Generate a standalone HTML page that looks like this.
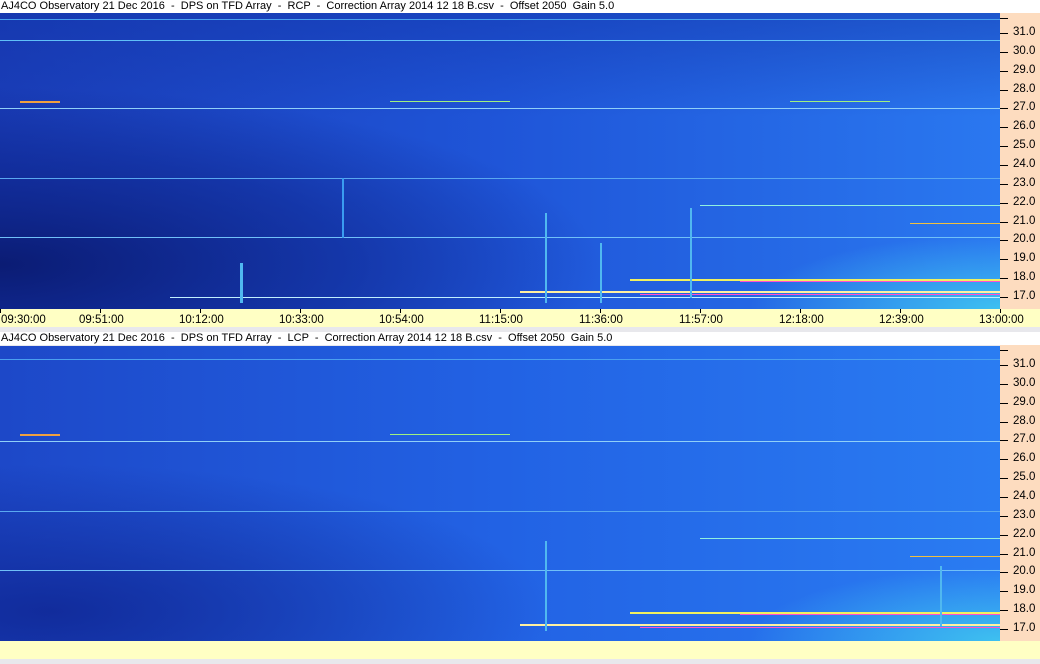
<!DOCTYPE html>
<html><head><style>
body{margin:0;width:1040px;height:664px;overflow:hidden;background:#e8e8ec;font-family:"Liberation Sans",sans-serif;font-size:11px;position:relative}
.t{position:absolute;left:0;width:1040px;height:13px;background:#fff;color:#000;line-height:13px;white-space:pre;padding-left:1px;box-sizing:border-box;font-size:11px}
.ax{position:absolute;left:1000px;width:40px;background:#fddcbf}
.tb{position:absolute;left:0;width:1040px;height:18px;background:#ffffc4}
.lab{position:absolute;font-size:11.5px;color:#000}
.tk{position:absolute;background:#000}
</style></head><body>
<div class="t" style="top:0px">AJ4CO Observatory 21 Dec 2016  -  DPS on TFD Array  -  RCP  -  Correction Array 2014 12 18 B.csv  -  Offset 2050  Gain 5.0</div>
<div class="t" style="top:332px">AJ4CO Observatory 21 Dec 2016  -  DPS on TFD Array  -  LCP  -  Correction Array 2014 12 18 B.csv  -  Offset 2050  Gain 5.0</div>
<div class="ax" style="top:13px;height:296px"></div>
<div class="ax" style="top:345px;height:296px"></div>
<div class="tb" style="top:309px"></div>
<div class="tb" style="top:641px"></div>
<svg width="1000" height="664" style="position:absolute;left:0;top:0">
<defs>
<linearGradient id="h1" x1="0" x2="1" y1="0" y2="0"><stop offset="0" stop-color="#1a3db8"/><stop offset="0.5" stop-color="#1f55d8"/><stop offset="1" stop-color="#2a78f0"/></linearGradient>
<linearGradient id="v1" x1="0" x2="0" y1="0" y2="1"><stop offset="0" stop-color="#1234a8" stop-opacity="0.5"/><stop offset="0.35" stop-color="#1234a8" stop-opacity="0"/><stop offset="1" stop-color="#081a70" stop-opacity="0"/></linearGradient>
<radialGradient id="d1" cx="0" cy="0.85" r="0.6"><stop offset="0" stop-color="#0a1a70" stop-opacity="0.95"/><stop offset="0.6" stop-color="#0c2288" stop-opacity="0.5"/><stop offset="1" stop-color="#0c2288" stop-opacity="0"/></radialGradient>
<radialGradient id="c1" cx="1" cy="1" r="0.25"><stop offset="0" stop-color="#40c8f0" stop-opacity="0.9"/><stop offset="1" stop-color="#40c8f0" stop-opacity="0"/></radialGradient>
<linearGradient id="h2" x1="0" x2="1" y1="0" y2="0"><stop offset="0" stop-color="#1d48c8"/><stop offset="0.5" stop-color="#2262e4"/><stop offset="1" stop-color="#2a7cf2"/></linearGradient>
<radialGradient id="d2" cx="0.05" cy="0.9" r="0.5"><stop offset="0" stop-color="#0e2490" stop-opacity="0.8"/><stop offset="1" stop-color="#0e2490" stop-opacity="0"/></radialGradient>
</defs>
<g transform="translate(0,13)">
<rect width="1000" height="296" fill="url(#h1)"/>
<rect width="1000" height="296" fill="url(#v1)"/>
<rect width="1000" height="296" fill="url(#d1)"/>
<rect width="1000" height="296" fill="url(#c1)"/>
<rect y="6" width="1000" height="1" fill="#4aa0f0"/>
<rect y="27" width="1000" height="1" fill="#60c0f8"/>
<rect y="95" width="1000" height="1" fill="#90d0f8"/>
<rect y="165" width="1000" height="1" fill="#5aa8f0"/>
<rect y="224" width="1000" height="1" fill="#70c0f8"/>
<rect x="170" y="284" width="830" height="1" fill="#c0f0ff"/>
<rect x="700" y="192" width="300" height="1" fill="#90f0e0"/>
<rect x="910" y="210" width="90" height="1" fill="#f0c040"/>
<rect x="630" y="266" width="370" height="2" fill="#f0f060"/>
<rect x="740" y="268" width="260" height="1" fill="#ff50d0"/>
<rect x="520" y="278" width="480" height="2" fill="#fff0a0"/>
<rect x="640" y="281" width="360" height="1" fill="#ff50d0"/>
<rect x="20" y="88" width="40" height="2" fill="#f0a040"/>
<rect x="390" y="88" width="120" height="1" fill="#a0f080"/>
<rect x="790" y="88" width="100" height="1" fill="#a0f080"/>
<rect x="240" y="250" width="3" height="40" fill="#50b8f0"/>
<rect x="545" y="200" width="2" height="90" fill="#50b8f0"/>
<rect x="690" y="195" width="2" height="90" fill="#50b8f0"/>
<rect x="342" y="165" width="2" height="60" fill="#3a9cf0"/>
<rect x="600" y="230" width="2" height="60" fill="#50b8f0"/>
</g>
<g transform="translate(0,346)">
<rect width="1000" height="295" fill="url(#h2)"/>
<rect width="1000" height="295" fill="url(#d2)"/>
<rect width="1000" height="295" fill="url(#c1)"/>
<rect y="13" width="1000" height="1" fill="#4aa0f0"/>
<rect y="95" width="1000" height="1" fill="#90d0f8"/>
<rect y="165" width="1000" height="1" fill="#5aa8f0"/>
<rect y="224" width="1000" height="1" fill="#70c0f8"/>
<rect x="700" y="192" width="300" height="1" fill="#90f0e0"/>
<rect x="910" y="210" width="90" height="1" fill="#f0c040"/>
<rect x="630" y="266" width="370" height="2" fill="#f0f060"/>
<rect x="740" y="268" width="260" height="1" fill="#ff50d0"/>
<rect x="520" y="278" width="480" height="2" fill="#fff0a0"/>
<rect x="640" y="281" width="360" height="1" fill="#ff50d0"/>
<rect x="20" y="88" width="40" height="2" fill="#f0a040"/>
<rect x="390" y="88" width="120" height="1" fill="#a0f080"/>
<rect x="545" y="195" width="2" height="90" fill="#50b8f0"/>
<rect x="940" y="220" width="2" height="60" fill="#50b8f0"/>
</g>
</svg>
<div id="ax"></div>
<script>
var h='';
var vals=['31.0','30.0','29.0','28.0','27.0','26.0','25.0','24.0','23.0','22.0','21.0','20.0','19.0','18.0','17.0'];
[13,345].forEach(function(o){
 h+='<div class="tk" style="left:1000px;top:'+(o+5)+'px;width:8px;height:1px"></div>';
 vals.forEach(function(v,i){var y=o+20+i*18.86;
  h+='<div class="tk" style="left:1000px;top:'+Math.round(y)+'px;width:8px;height:1px"></div>';
  h+='<div class="lab" style="left:1013px;top:'+Math.round(y-7)+'px">'+v+'</div>';});
});
var t=['09:30:00','09:51:00','10:12:00','10:33:00','10:54:00','11:15:00','11:36:00','11:57:00','12:18:00','12:39:00','13:00:00'];
t.forEach(function(s,i){var x=i*100;
 h+='<div class="tk" style="left:'+x+'px;top:309px;width:1px;height:4px"></div>';
 h+='<div class="lab" style="left:'+(i==0?1:x-21)+'px;top:314px">'+s+'</div>';});
document.getElementById('ax').innerHTML=h;
</script>
</body></html>
